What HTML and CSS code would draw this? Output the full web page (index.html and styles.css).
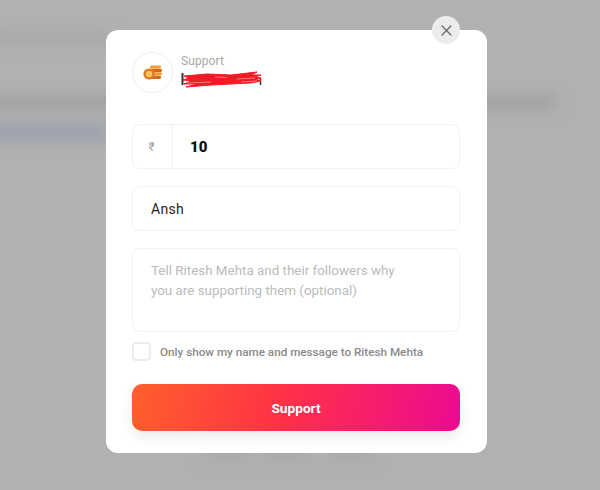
FILE: index.html
```html
<!DOCTYPE html>
<html lang="en">
<head>
<meta charset="utf-8">
<title>Support</title>
<link rel="stylesheet" href="styles.css">
</head>
<body>
<div class="backdrop" aria-hidden="true">
  <div class="smear smear-title"></div>
  <div class="smear smear-body"></div>
  <div class="smear smear-link"></div>
  <div class="smear smear-social one"></div>
  <div class="smear smear-social two"></div>
  <div class="smear smear-social three"></div>
</div>
<main class="modal">
  <button class="close" type="button" aria-label="Close">
    <svg viewBox="0 0 12 12" width="11" height="11"><path d="M1.2 1.2 10.8 10.8M10.8 1.2 1.2 10.8" fill="none" stroke="#707070" stroke-width="1.6" stroke-linecap="round"/></svg>
  </button>
  <header class="head">
    <div class="avatar">
      <svg viewBox="0 0 20 16" width="20" height="16">
        <rect x="7" y="0.5" width="11" height="3.2" rx="1.4" fill="#f0a02c"/>
        <rect x="8" y="3.9" width="11" height="3.2" rx="1.4" fill="#d9661f"/>
        <rect x="8" y="7.3" width="11" height="3.2" rx="1.4" fill="#f0a02c"/>
        <rect x="7" y="10.7" width="11" height="3.2" rx="1.4" fill="#d9661f"/>
        <circle cx="6" cy="9" r="5.6" fill="#dd7a22"/>
        <circle cx="6" cy="9" r="3.2" fill="#fbc560"/>
      </svg>
    </div>
    <div class="who">
      <div class="who-label">Support</div>
      <div class="who-name">
        <svg viewBox="0 0 82 17" width="82" height="17">
          <path d="M1.5 2v12" stroke="#333" stroke-width="2" fill="none"/>
          <path d="M79.5 7v7" stroke="#333" stroke-width="1.5" fill="none"/>
          <path d="M3 5 26 3 50 4 76 1 70 4 80 4 74 6 80 7 74 9 80 10 70 12 50 13 30 14 5 16 16 13 3 13 10 10 2 9 8 7Z" fill="#ee1c25" stroke="#ee1c25" stroke-width="1"/>
          <path d="M6 12 30 11M34 6 46 6.500M56 8 74 7M60 11 76 10" stroke="#f9a0a0" stroke-width="0.7" fill="none"/>
        </svg>
      </div>
    </div>
  </header>
  <form class="form">
    <div class="field amount">
      <span class="currency">₹</span>
      <span class="amount-value">10</span>
    </div>
    <div class="field name">Ansh</div>
    <div class="field message">Tell Ritesh Mehta and their followers why<br>you are supporting them (optional)</div>
    <label class="private">
      <span class="check"></span>
      <span class="private-text">Only show my name and message to Ritesh Mehta</span>
    </label>
    <button class="submit" type="button">Support</button>
  </form>
</main>
</body>
</html>
```
FILE: styles.css
```css
* { box-sizing: border-box; }
html, body { margin: 0; height: 100%; }
body {
  width: 600px;
  height: 490px;
  overflow: hidden;
  background: #b1b1b1;
  font-family: Roboto, "Liberation Sans", sans-serif;
  padding: 30px 113px 0 106px;
}
.backdrop { position: absolute; inset: 0; overflow: hidden; }
.smear { position: absolute; filter: blur(7px); background: #a3a3a3; }
.smear-title { left: -10px; top: 34px; width: 122px; height: 10px; background: #a6a6a6; }
.smear-body { left: -10px; top: 96px; width: 565px; height: 12px; background: #9e9e9e; }
.smear-link { left: -10px; top: 126px; width: 118px; height: 13px; background: #979cad; }
.smear-social { top: 446px; height: 15px; width: 44px; border-radius: 50%; background: #a8a8a8; }
.smear-social.one { left: 204px; }
.smear-social.two { left: 264px; }
.smear-social.three { left: 328px; }

.modal {
  position: relative;
  width: 381px;
  height: 423px;
  background: #fff;
  border-radius: 12px;
  padding: 22px 27px 0 26px;
}
.close {
  position: absolute;
  top: -14px;
  right: 27px;
  width: 28px;
  height: 28px;
  padding: 0;
  border: 0;
  border-radius: 50%;
  background: #ececec;
  display: flex;
  align-items: center;
  justify-content: center;
}
.head { display: flex; gap: 8px; height: 72px; }
.avatar {
  width: 41px;
  height: 41px;
  border: 1px solid #efefef;
  border-radius: 50%;
  display: flex;
  align-items: center;
  justify-content: center;
}
.who { padding-top: 2px; }
.who-label { font-size: 12px; line-height: 15px; color: #a8a8a8; letter-spacing: 0.1px; }
.who-name { height: 17px; line-height: 0; padding-top: 2px; }

.form { display: flex; flex-direction: column; }
.field {
  width: 328px;
  border: 1px solid #f1f1f1;
  border-radius: 8px;
  color: #222;
  font-size: 14px;
}
.amount { display: flex; height: 45px; margin-bottom: 17px; }
.currency {
  width: 40px;
  border-right: 1px solid #f1f1f1;
  display: flex;
  align-items: center;
  justify-content: center;
  color: #a0a0a0;
  font-size: 12px;
  padding-right: 2px;
}
.amount-value { padding-left: 17px; line-height: 44px; font-weight: 900; font-size: 15px; color: #111; }
.name { height: 45px; line-height: 44px; padding-left: 18px; margin-bottom: 17px; font-size: 14px; letter-spacing: 0.3px; }
.message {
  height: 84px;
  padding: 12px 18px;
  color: #bbb;
  font-size: 13.4px;
  line-height: 20px;
  margin-bottom: 10px;
}
.private { display: flex; align-items: center; gap: 9px; height: 19px; margin-bottom: 23px; }
.check {
  width: 19px;
  height: 19px;
  border: 2px solid #ececec;
  border-radius: 4px;
}
.private-text { font-size: 11.7px; font-weight: 500; color: #8a8a8a; }
.submit {
  width: 328px;
  height: 47px;
  border: 0;
  border-radius: 10px;
  background: linear-gradient(100deg, #ff5f2c 0%, #ff3245 45%, #ec0a92 100%);
  box-shadow: 0 6px 14px rgba(0, 0, 0, 0.08);
  color: #fff;
  font-family: inherit;
  font-size: 13.7px;
  font-weight: 700;
}
```
